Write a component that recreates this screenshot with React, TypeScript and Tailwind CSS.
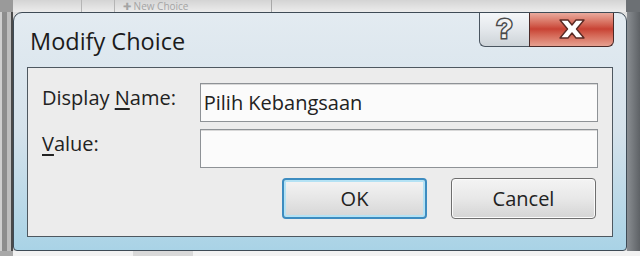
import React from "react";

const font = "font-['Segoe_UI','Open_Sans','Noto_Sans',sans-serif]";

function CloseIcon() {
  return (
    <svg width="30" height="22" viewBox="0 0 30 22">
      <path
        d="M3 2 L11 2 L15 7 L19 2 L27 2 L19.5 11 L27 20 L19 20 L15 15 L11 20 L3 20 L10.5 11 Z"
        fill="#ffffff"
        stroke="#5a2a24"
        strokeWidth="1.4"
        strokeLinejoin="round"
      />
    </svg>
  );
}

function TitleButtons() {
  return (
    <div className="flex h-[35px] -mt-px">
      <div className="w-[50px] h-full flex items-center justify-center rounded-bl-[6px] border border-t-0 border-r-0 border-[#4a5560] bg-gradient-to-b from-[#f6f8fa] via-[#e4e8ec] to-[#cdd3d8]">
        <span className="text-[27px] font-bold leading-none text-[#f2f2f2] [-webkit-text-stroke:3px_#4a4a4a] [paint-order:stroke_fill] font-['Liberation_Sans',sans-serif]">
          ?
        </span>
      </div>
      <div className="w-[85px] h-full flex items-center justify-center rounded-br-[6px] border border-t-0 border-[#4a2a28] bg-gradient-to-b from-[#eab0a4] via-[#c84234] to-[#e6a090]">
        <CloseIcon />
      </div>
    </div>
  );
}

function TextBox({ value }: { value?: string }) {
  return (
    <div className="w-[399px] h-[39px] flex items-center px-[3px] border border-[#8e9296] bg-[#fbfbfb] shadow-[inset_0_1px_0_#d8d8d8] text-[20px] text-[#222]">
      {value}
    </div>
  );
}

export default function App() {
  return (
    <div className={`w-[640px] h-[256px] flex flex-col overflow-hidden bg-[#dedede] ${font}`}>
      {/* window behind, top strip */}
      <div className="h-[12px] flex shrink-0 bg-gradient-to-b from-[#d4d4d4] to-[#ececec]">
        <div className="w-[13px] bg-[#9a9a9a]" />
        <div className="w-[69px] border-r border-[#b5b5b5]" />
        <div className="w-[33px] border-r border-[#b5b5b5]" />
        <div className="w-[157px] border-r border-[#a8a8a8] text-[10px] leading-[12px] text-[#a4a4a4] pl-2">
          ✚ New Choice
        </div>
        <div className="flex-1" />
        <div className="w-[14px] bg-[#6c7074]" />
      </div>

      <div className="flex h-[239px] shrink-0">
        {/* left edge of window behind */}
        <div className="w-[13px] flex bg-[#cfcfcf]">
          <div className="w-[2px]" />
          <div className="w-[5px] bg-[#8d8d8d]" />
          <div className="w-[4px] bg-[#bdbdbd]" />
          <div className="w-[2px] bg-[#4a4a4a]" />
        </div>

        {/* dialog */}
        <div className="w-[614px] flex flex-col rounded-t-[9px] rounded-b-[4px] border border-[#3e4b56] bg-gradient-to-b from-[#e3ebf1] via-[#d5e2eb] to-[#a9d3e6] overflow-hidden">
          <div className="h-[54px] flex justify-between pl-[16px] pr-[12px] shrink-0">
            <div className="pt-[13px] text-[23.5px] leading-[30px] text-[#1b1b1b]">Modify Choice</div>
            <TitleButtons />
          </div>

          <div className="mx-[13px] h-[170px] flex flex-col border border-[#4e5860] bg-[#ececec] pl-[14px] pr-[14px] pt-[15px]">
            <div className="flex items-start">
              <div className="w-[158px] pt-[1px] text-[20px] leading-[27px] text-[#222]">
                Display <span className="underline underline-offset-[3px]">N</span>ame:
              </div>
              <TextBox value="Pilih Kebangsaan" />
            </div>
            <div className="flex items-start mt-[7px]">
              <div className="w-[158px] pt-[1px] text-[20px] leading-[27px] text-[#222]">
                <span className="underline underline-offset-[3px]">V</span>alue:
              </div>
              <TextBox />
            </div>
            <div className="flex justify-end gap-[24px] mt-[10px] pr-[2px]">
              <button className="w-[145px] h-[41px] rounded-[4px] border-2 border-[#3d8cc0] bg-gradient-to-b from-[#f4f4f4] via-[#e6e6e6] to-[#d6d6d6] shadow-[inset_0_0_0_2px_#b4e2f4] text-[20px] text-[#222]">
                OK
              </button>
              <button className="w-[145px] h-[41px] rounded-[4px] border border-[#6e6e6e] bg-gradient-to-b from-[#f4f4f4] via-[#e8e8e8] to-[#d4d4d4] shadow-[inset_0_0_0_1px_#fbfbfb] text-[20px] text-[#222]">
                Cancel
              </button>
            </div>
          </div>
        </div>

        {/* right edge */}
        <div className="flex-1 bg-gradient-to-r from-[#8a8e92] to-[#5e6266]" />
      </div>

      <div className="flex-1 bg-[#f2f2f2] flex">
        <div className="w-[13px] bg-[#a8a8a8]" />
        <div className="w-[120px]" />
        <div className="w-[60px] bg-[#c0c0c0] opacity-50" />
      </div>
    </div>
  );
}
